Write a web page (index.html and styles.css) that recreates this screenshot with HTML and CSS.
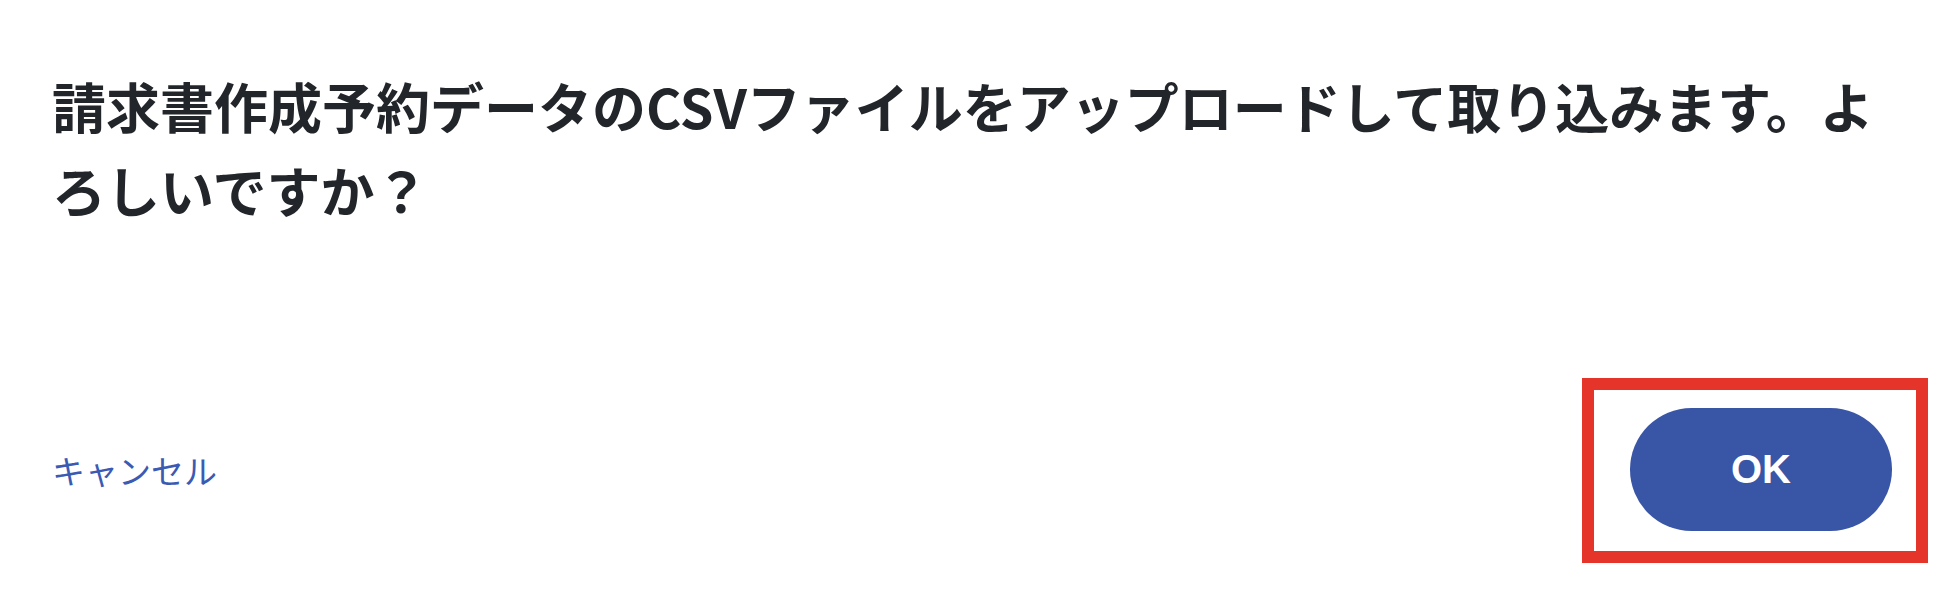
FILE: index.html
```html
<!DOCTYPE html>
<html lang="ja">
<head>
<meta charset="utf-8">
<title>確認</title>
<link rel="stylesheet" href="styles.css">
</head>
<body>
<div class="dialog">
  <p class="message">請求書作成予約データのCSVファイルをアップロードして取り込みます。よろしいですか？</p>
  <div class="footer">
    <a class="cancel" href="#">キャンセル</a>
    <div class="ok-wrap">
      <button class="ok" type="button">OK</button>
      <span class="highlight"></span>
    </div>
  </div>
</div>
</body>
</html>
```

FILE: styles.css
```css
html, body {
  margin: 0;
  padding: 0;
  background: #ffffff;
}

.dialog {
  box-sizing: border-box;
  width: 1948px;
  height: 590px;
  padding: 64px 56px 0 52px;
  font-family: "Noto Sans CJK JP", "Noto Sans", sans-serif;
}

.message {
  margin: 0;
  font-size: 54px;
  line-height: 84px;
  font-weight: 700;
  color: #22262b;
}

.footer {
  display: flex;
  align-items: center;
  justify-content: space-between;
  margin-top: 176px;
}

.cancel {
  font-size: 33px;
  line-height: 40px;
  color: #3b5ab3;
  text-decoration: none;
}

.ok-wrap {
  position: relative;
}

.ok {
  display: block;
  width: 262px;
  height: 123px;
  border: none;
  border-radius: 62px;
  background: #3955a6;
  color: #ffffff;
  font-family: "Liberation Sans", Arial, sans-serif;
  font-weight: 700;
  font-size: 40px;
  padding: 0;
}

.highlight {
  position: absolute;
  top: -30px;
  bottom: -32px;
  left: -48px;
  right: -36px;
  border: 12px solid #e5352a;
  pointer-events: none;
}
```
